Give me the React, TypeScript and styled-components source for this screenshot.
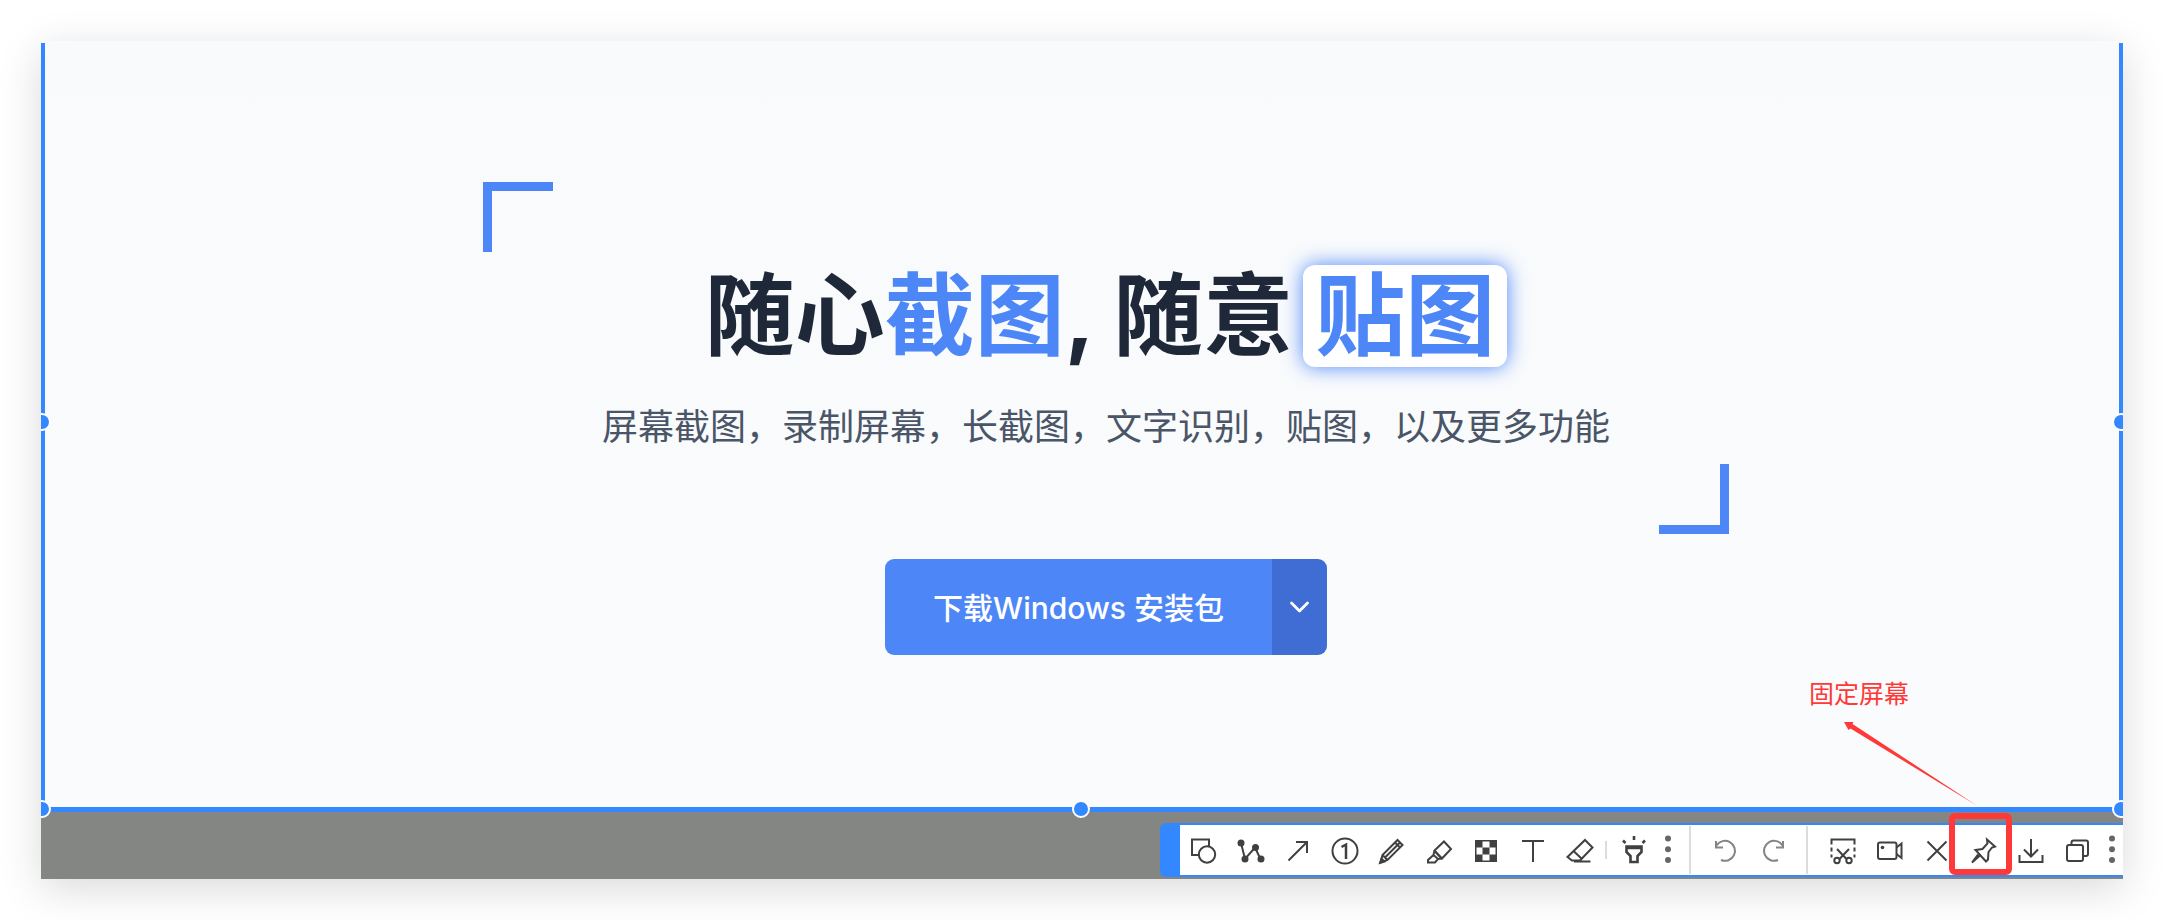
import React from "react";
import styled, { createGlobalStyle, css } from "styled-components";

const GlobalStyle = createGlobalStyle`
  *, *::before, *::after { box-sizing: border-box; }
  body {
    margin: 0;
    background: #ffffff;
    font-family: Inter, "Noto Sans CJK SC", sans-serif;
  }
  button { font: inherit; margin: 0; padding: 0; border: 0; background: none; cursor: pointer; }
`;

const Page = styled.main`
  padding: 41px;
`;

const Screen = styled.div`
  position: relative;
  overflow: hidden;
  background: #848684;
`;

const Shadow = styled.div`
  box-shadow: 0 10px 40px rgba(0, 0, 0, 0.15);
`;

const Selection = styled.section`
  position: relative;
  padding-top: 2px;
  background: linear-gradient(#f8fafc, #fafbfd);
`;

const SelectionArea = styled.div`
  display: flex;
  flex-direction: column;
  align-items: center;
  padding: 139px 0 152px 48px;
  border: solid #3388ff;
  border-width: 0 4px 5px;
`;

type Spot = "left" | "right" | "bottomLeft" | "bottom" | "bottomRight";

const spots = {
  left: css`left: -8px; top: 372px;`,
  right: css`right: -7px; top: 372px;`,
  bottomLeft: css`left: -8px; bottom: -6px;`,
  bottom: css`left: calc(50% - 10px); bottom: -6px;`,
  bottomRight: css`right: -7px; bottom: -6px;`,
};

const Handle = styled.span<{ $spot: Spot }>`
  position: absolute;
  width: 18px;
  height: 18px;
  border: 2px solid #ffffff;
  border-radius: 50%;
  background: #3388ff;
  ${({ $spot }) => spots[$spot]}
`;

const Frame = styled.div`
  position: relative;
  width: 100%;
  max-width: 1246px;
  padding: 70px 24px 79px;
  text-align: center;

  &::before,
  &::after {
    content: "";
    position: absolute;
    width: 70px;
    height: 70px;
    border: solid #4d87f7;
  }
  &::before { left: 0; top: 0; border-width: 9px 0 0 9px; }
  &::after { right: 0; bottom: 0; border-width: 0 9px 9px 0; }
`;

const Title = styled.h1`
  margin: 0;
  color: #1f2839;
  font-size: 90px;
  font-weight: 700;
  line-height: 128px;
`;

const Accent = styled.span`
  color: #4d87f7;
`;

const Pinned = styled.span`
  display: inline-block;
  margin-left: 10px;
  padding: 0 12px;
  border-radius: 12px;
  background: #ffffff;
  box-shadow: 0 0 20px #4d87f7;
  color: #4d87f7;
  line-height: 102px;
`;

const Subtitle = styled.p`
  margin: 20px 0 0;
  color: #4a5567;
  font-size: 36px;
  line-height: 55px;
`;

const Download = styled.div`
  display: flex;
  height: 96px;
  margin-top: 25px;
  overflow: hidden;
  border-radius: 9px;
  color: #ffffff;
`;

const DownloadButton = styled.button`
  padding: 0 48px 3px;
  background: #4d87f7;
  color: inherit;
  font-size: 30px;
  font-weight: 500;
`;

const DownloadMenu = styled.button`
  display: grid;
  place-items: center;
  width: 55px;
  background: #3f6dd3;
  color: inherit;
`;

const Dock = styled.div`
  display: flex;
  justify-content: flex-end;
  padding: 11px 0 2px;
`;

const Toolbar = styled.div`
  position: relative;
  display: flex;
  align-items: center;
  height: 54px;
  border: solid #3388ff;
  border-width: 2px 0 2px 20px;
  border-radius: 6px 0 0 6px;
  background: #ffffff;
  color: #404040;
`;

const Tool = styled.button<{ $muted?: boolean }>`
  display: grid;
  place-items: center;
  width: 47px;
  height: 50px;
  padding-top: 2px;
  color: ${({ $muted }) => ($muted ? "#858585" : "inherit")};
`;

const More = styled.button`
  display: grid;
  place-items: center;
  width: 22px;
  height: 50px;
  padding-top: 2px;
  color: #666666;
`;

const Divider = styled.span<{ $short?: boolean }>`
  width: 2px;
  height: ${({ $short }) => ($short ? "18px" : "48px")};
  margin: ${({ $short }) => ($short ? "0 3px 0 2px" : "0 11px 0 10px")};
  background: #dcdcdc;
`;

const Highlight = styled.span`
  position: absolute;
  right: 111px;
  bottom: 4px;
  width: 63px;
  height: 62px;
  border: 6px solid #ff3838;
  border-radius: 6px;
`;

const Note = styled.div`
  position: absolute;
  right: 145px;
  bottom: 5px;
  width: 169px;
  color: #ff3838;
  font-size: 25px;
  line-height: 36px;

  svg { display: block; margin: 10px 0 0 35px; }
`;

const Glyph = styled.svg`
  display: block;
  overflow: visible;
`;

function Icon({ children, width = 2 }: { children: React.ReactNode; width?: number }) {
  return (
    <Glyph width="28" height="28" viewBox="0 0 28 28" fill="none" stroke="currentColor" strokeWidth={width} aria-hidden="true">
      {children}
    </Glyph>
  );
}

const icons = {
  shapes: (
    <Icon>
      <path d="M9.5 18H2V2.5h17V9" />
      <circle cx="17" cy="17.5" r="8.2" />
    </Icon>
  ),
  polyline: (
    <Icon>
      <path d="M4 6l4 16L18 10.5l5.5 11.5" />
      <g fill="currentColor" stroke="none">
        <circle cx="4" cy="6" r="3.5" />
        <circle cx="8" cy="22" r="3.5" />
        <circle cx="18.5" cy="10.5" r="3.5" />
        <circle cx="24" cy="22" r="3.5" />
      </g>
    </Icon>
  ),
  arrow: (
    <Icon>
      <path d="M4.5 23.5L23 5M12 5h11v11" />
    </Icon>
  ),
  number: (
    <Icon>
      <circle cx="14" cy="14" r="12.5" />
      <path d="M10.5 10l4.500-2.500V22" strokeWidth="2.500" />
    </Icon>
  ),
  pencil: (
    <Icon>
      <path d="M2.500 25.500l2-7.500L19.500 3l5 5L9.500 23zM4.500 18l5 5M7 20.500L22 5.500M17 5.500l5 5" />
      <path d="M2 26l1.500-4.500 3 3z" fill="currentColor" />
    </Icon>
  ),
  marker: (
    <Icon>
      <path d="M9.500 13.500L19 4.500l7 7.500-9 9.500zM9.500 13.500l-1 4.500 4.500 4 4-.500M8.500 18L3 23v2.500h7l3-3.500M10.500 15l5 5.500" />
    </Icon>
  ),
  mosaic: (
    <Icon>
      <path d="M3 3h22v22H3z" fill="currentColor" stroke="none" />
      <path d="M10.500 4.500h7v6h-7zM4.500 10.500h6v7h-6zM17.500 10.500h6v7h-6zM10.500 17.500h7v6h-7z" fill="#fff" stroke="none" />
    </Icon>
  ),
  text: (
    <Icon>
      <path d="M3 4h22M14 4v21" />
    </Icon>
  ),
  eraser: (
    <Icon>
      <path d="M19 3l7.500 7.500L14 23.500H6L1.500 20zM7.500 14L16 22M8 24.500h16.500" />
    </Icon>
  ),
  torch: (
    <Icon width={2.6}>
      <path d="M6.500 9.500h15v5.500l-4 4v6h-7v-6l-4-4zM6.500 11h15M14-1v4M3 3.500L5.500 6M25 3.500L22.500 6" />
    </Icon>
  ),
  undo: (
    <Icon>
      <path d="M4.500 8.500A10 10 0 1 1 9 23M4 4v6.500h7" />
    </Icon>
  ),
  redo: (
    <Icon>
      <path d="M23.500 8.500A10 10 0 1 0 19 23M24 4v6.500h-7" />
    </Icon>
  ),
  clip: (
    <Icon>
      <path d="M2.500 7.500v-5h23v5M2.500 10.500v4M25.500 10.500v4M2.500 17.500v3M25.500 17.500v3" />
      <path d="M8 12l9.500 10M20 12l-9.500 10" />
      <circle cx="8" cy="23.500" r="2.700" />
      <circle cx="20" cy="23.500" r="2.700" />
    </Icon>
  ),
  record: (
    <Icon>
      <rect x="2" y="5.500" width="18.500" height="16.500" rx="2" />
      <path d="M20.500 10.500l5-4v14.500l-5-4" />
      <circle cx="6.500" cy="10.500" r="1.800" fill="currentColor" stroke="none" />
    </Icon>
  ),
  close: (
    <Icon>
      <path d="M4.500 4.500l19 19M23.500 4.500l-19 19" />
    </Icon>
  ),
  pin: (
    <Icon>
      <path d="M17 2.500l8 7-3 1-3.500 4.500-.500 7.500-2 2L5.500 13l7-1 5-5.500zM10 18.500L2 25.500l6-8" />
    </Icon>
  ),
  save: (
    <Icon>
      <path d="M14 2v17M7 12.500l7 7 7-7M2.500 18v7h23v-7" />
    </Icon>
  ),
  copy: (
    <Icon>
      <rect x="3" y="8" width="16" height="16" rx="2" />
      <path d="M7.500 8V5.500a2 2 0 0 1 2-2H22a2 2 0 0 1 2 2V17a2 2 0 0 1-2 2h-2.500" />
    </Icon>
  ),
};

type IconName = keyof typeof icons;

const drawTools: [IconName, string][] = [
  ["shapes", "形状"],
  ["polyline", "折线"],
  ["arrow", "箭头"],
  ["number", "序号"],
  ["pencil", "画笔"],
  ["marker", "荧光笔"],
  ["mosaic", "马赛克"],
  ["text", "文字"],
  ["eraser", "橡皮擦"],
];

const historyTools: [IconName, string][] = [
  ["undo", "撤销"],
  ["redo", "重做"],
];

const outputTools: [IconName, string][] = [
  ["clip", "长截图"],
  ["record", "录制屏幕"],
  ["close", "取消"],
  ["pin", "固定屏幕"],
  ["save", "保存"],
  ["copy", "复制"],
];

function Tools({ items, muted }: { items: [IconName, string][]; muted?: boolean }) {
  return (
    <>
      {items.map(([name, label]) => (
        <Tool key={name} type="button" aria-label={label} $muted={muted}>
          {icons[name]}
        </Tool>
      ))}
    </>
  );
}

function MoreButton() {
  return (
    <More type="button" aria-label="更多">
      <Glyph width="6" height="28" viewBox="0 0 6 28" fill="currentColor" aria-hidden="true">
        <circle cx="3" cy="1.500" r="3" />
        <circle cx="3" cy="12.300" r="3" />
        <circle cx="3" cy="23" r="3" />
      </Glyph>
    </More>
  );
}

const handleSpots: Spot[] = ["left", "right", "bottomLeft", "bottom", "bottomRight"];

export default function App() {
  return (
    <Page>
      <GlobalStyle />
      <Shadow>
        <Screen>
          <Selection>
            <SelectionArea>
              <Frame>
                <Title>
                  随心<Accent>截图</Accent>, 随意<Pinned>贴图</Pinned>
                </Title>
                <Subtitle>屏幕截图，录制屏幕，长截图，文字识别，贴图，以及更多功能</Subtitle>
              </Frame>
              <Download>
                <DownloadButton type="button">下载Windows 安装包</DownloadButton>
                <DownloadMenu type="button" aria-label="其他安装包">
                  <Glyph width="20" height="12" viewBox="0 0 20 12" fill="none" stroke="currentColor" strokeWidth="2.800" strokeLinecap="round" strokeLinejoin="round" aria-hidden="true">
                    <path d="M2.500 2l8 8 8-8" />
                  </Glyph>
                </DownloadMenu>
              </Download>
            </SelectionArea>
            {handleSpots.map((spot) => (
              <Handle key={spot} $spot={spot} />
            ))}
            <Note>
              固定屏幕
              <Glyph width="134" height="85" viewBox="0 0 134 85" fill="#ff3838" aria-hidden="true">
                <path d="M0 0l9.500 0-1 2L133.500 84 6.500 6.500 4.500 8z" />
              </Glyph>
            </Note>
          </Selection>
          <Dock>
            <Toolbar role="toolbar" aria-label="截图工具">
              <Tools items={drawTools} />
              <Divider $short />
              <Tool type="button" aria-label="聚光灯">{icons.torch}</Tool>
              <MoreButton />
              <Divider />
              <Tools items={historyTools} muted />
              <Divider />
              <Tools items={outputTools} />
              <MoreButton />
            </Toolbar>
          </Dock>
          <Highlight />
        </Screen>
      </Shadow>
    </Page>
  );
}
